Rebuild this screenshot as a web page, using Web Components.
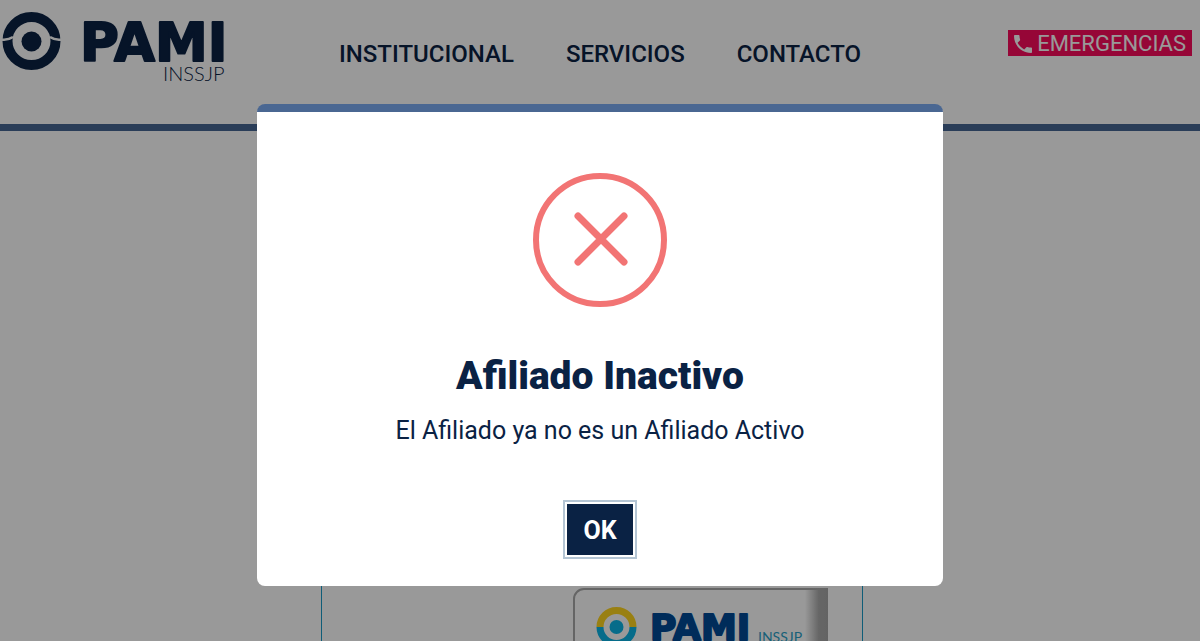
<!DOCTYPE html>
<html lang="es">
<head>
<meta charset="utf-8">
<meta name="viewport" content="width=device-width, initial-scale=1">
<title>PAMI - Afiliado</title>
<style>
    body{
        background: #fff;
        color: #0a2244;
        font-family: Roboto, "Liberation Sans", sans-serif;
        margin: 0;
        overflow: hidden;
    }
</style>
</head>
<body>
    <site-header>
        <pami-logo slot="logo"></pami-logo>
        <nav-link href="#institucional">INSTITUCIONAL</nav-link>
        <nav-link href="#servicios">SERVICIOS</nav-link>
        <nav-link href="#contacto">CONTACTO</nav-link>
        <emergency-link slot="action" href="#emergencias">EMERGENCIAS</emergency-link>
    </site-header>
    <affiliate-panel>
        <affiliate-card></affiliate-card>
    </affiliate-panel>
    <alert-modal>
        <span slot="title">Afiliado Inactivo</span>
        <span slot="text">El Afiliado ya no es un Afiliado Activo</span>
        <span slot="confirm">OK</span>
    </alert-modal>

<script>
class BaseElement extends HTMLElement
{
    constructor()
    {
        super();
        this.attachShadow({mode: "open"});
    }

    connectedCallback()
    {
        const template = document.createElement("template");
        template.innerHTML = `${this.getStyles()}${this.getTemplate()}`;
        this.shadowRoot.replaceChildren(template.content.cloneNode(true));
    }
}

class SiteHeader extends BaseElement
{
    getTemplate()
    {
        return `
            <header>
                <slot name="logo"></slot>
                <nav aria-label="Principal"><slot></slot></nav>
                <div class="action"><slot name="action"></slot></div>
            </header>
        `
    }

    getStyles()
    {
        return `
        <style>
            :host{
                display: block;
            }

            header{
                align-items: start;
                border-bottom: 7px solid #466793;
                display: grid;
                grid-template-columns: 1fr auto 1fr;
                min-height: 124px;
            }

            nav{
                display: flex;
                gap: 52px;
                padding-top: 39px;
            }

            .action{
                display: flex;
                justify-content: flex-end;
                padding: 30px 8px 0 0;
            }
        </style>
        `
    }
}
customElements.define("site-header", SiteHeader);

class NavLink extends BaseElement
{
    getTemplate()
    {
        return `<a href="${this.getAttribute("href")}"><slot></slot></a>`
    }

    getStyles()
    {
        return `
        <style>
            :host{
                display: block;
            }

            a{
                color: inherit;
                display: block;
                font-size: 24px;
                font-weight: 500;
                line-height: 30px;
                text-decoration: none;
            }
        </style>
        `
    }
}
customElements.define("nav-link", NavLink);

class EmergencyLink extends BaseElement
{
    getTemplate()
    {
        return `
            <a href="${this.getAttribute("href")}">
                <svg viewBox="3 3 18 18" aria-hidden="true">
                    <path fill="currentColor" d="M6.6 10.8c1.4 2.8 3.8 5.1 6.6 6.6l2.2-2.2c.3-.3.7-.4 1-.2 1.1.4 2.3.6 3.6.6.6 0 1 .4 1 1V20c0 .6-.4 1-1 1C10.6 21 3 13.4 3 4c0-.6.4-1 1-1h3.5c.6 0 1 .4 1 1 0 1.2.2 2.4.6 3.6.1.3 0 .7-.2 1L6.6 10.8z"/>
                </svg>
                <slot></slot>
            </a>
        `
    }

    getStyles()
    {
        return `
        <style>
            :host{
                display: block;
            }

            a{
                align-items: center;
                background: #fb0a5c;
                color: #fff;
                display: flex;
                font-size: 22px;
                gap: 5px;
                line-height: 24px;
                padding: 2px 6px 0;
                text-decoration: none;
            }

            svg{
                height: 18px;
                width: 18px;
            }
        </style>
        `
    }
}
customElements.define("emergency-link", EmergencyLink);

class PamiLogo extends BaseElement
{
    getTemplate()
    {
        return `
            <svg viewBox="0 0 232 90" role="img" aria-label="PAMI INSSJP">
                <circle cx="31.5" cy="41" r="24" fill="none" stroke="currentColor" stroke-width="10"/>
                <path d="M1 39.5 Q8 40.5 13 37 M50 37 Q55 40.5 62 39.5" fill="none" stroke="#fff" stroke-width="2.5"/>
                <circle cx="31.5" cy="41.5" r="10" fill="currentColor"/>
                <text class="name" x="80" y="61">PAMI</text>
                <text class="sub" x="163" y="81">INSSJP</text>
            </svg>
        `
    }

    getStyles()
    {
        return `
        <style>
            :host{
                display: block;
            }

            svg{
                display: block;
                height: 90px;
                width: 232px;
            }

            .name{
                fill: currentColor;
                font: 700 53px "DejaVu Sans", sans-serif;
                stroke: currentColor;
                stroke-linejoin: round;
                stroke-width: 2px;
            }

            .sub{
                fill: currentColor;
                font: 300 20px Lato, sans-serif;
            }
        </style>
        `
    }
}
customElements.define("pami-logo", PamiLogo);

class AffiliatePanel extends BaseElement
{
    getTemplate()
    {
        return `<main><slot></slot></main>`
    }

    getStyles()
    {
        return `
        <style>
            :host{
                display: block;
                padding-right: 16px;
            }

            main{
                border: solid #1a9bc9;
                border-width: 0 1px;
                box-sizing: border-box;
                display: flex;
                justify-content: flex-end;
                margin: 0 auto;
                max-width: 542px;
                padding: 457px 34px 40px;
            }
        </style>
        `
    }
}
customElements.define("affiliate-panel", AffiliatePanel);

class AffiliateCard extends BaseElement
{
    getTemplate()
    {
        return `
            <svg viewBox="0 0 255 160" role="img" aria-label="Credencial PAMI INSSJP">
                <defs>
                    <linearGradient id="edge">
                        <stop offset="0" stop-color="#aaa" stop-opacity="0"/>
                        <stop offset="0.6" stop-color="#aaa"/>
                        <stop offset="1" stop-color="#a6a6a6"/>
                    </linearGradient>
                </defs>
                <path d="M255 1 H11 A10 10 0 0 0 1 11 V160" fill="none" stroke="#a8a8a8" stroke-width="2"/>
                <rect x="232" y="0" width="23" height="160" fill="url(#edge)"/>
                <g fill="none" stroke-width="7">
                    <path d="M27 39 A16.5 16.5 0 0 1 60 39" stroke="#ffd51e"/>
                    <path d="M27 39 A16.5 16.5 0 0 0 60 39" stroke="#0ab4e6"/>
                </g>
                <circle cx="43.5" cy="39" r="7" fill="#0ab4e6"/>
                <text class="name" x="77" y="52">PAMI</text>
                <text class="sub" x="185" y="54">INSSJP</text>
            </svg>
        `
    }

    getStyles()
    {
        return `
        <style>
            :host{
                display: block;
            }

            svg{
                display: block;
                height: 160px;
                width: 255px;
            }

            .name{
                fill: #004a96;
                font: 700 36px "DejaVu Sans", sans-serif;
                stroke: #004a96;
                stroke-linejoin: round;
                stroke-width: 2px;
            }

            .sub{
                fill: #2a9fc8;
                font: 400 14px Lato, sans-serif;
            }
        </style>
        `
    }
}
customElements.define("affiliate-card", AffiliateCard);

class AlertModal extends BaseElement
{
    getTemplate()
    {
        return `
            <section role="alertdialog" aria-modal="true" aria-labelledby="title" aria-describedby="text">
                <svg viewBox="0 0 134 134" aria-hidden="true">
                    <circle cx="67" cy="67" r="64" stroke-width="6"/>
                    <path d="M45 43 L91 89 M91 43 L45 89" stroke-width="7" stroke-linecap="round"/>
                </svg>
                <h2 id="title"><slot name="title"></slot></h2>
                <p id="text"><slot name="text"></slot></p>
                <button type="button"><slot name="confirm"></slot></button>
            </section>
        `
    }

    getStyles()
    {
        return `
        <style>
            :host{
                align-items: flex-start;
                background: rgba(0, 0, 0, 0.4);
                box-sizing: border-box;
                display: flex;
                inset: 0;
                justify-content: center;
                overflow: auto;
                padding: 104px 16px 16px;
                position: fixed;
            }

            section{
                align-items: center;
                background: #fff;
                border-radius: 8px;
                border-top: 8px solid #4a6792;
                box-sizing: border-box;
                display: flex;
                flex-direction: column;
                max-width: 686px;
                padding: 61px 20px 31px;
                text-align: center;
                width: 100%;
            }

            svg{
                fill: none;
                height: 134px;
                stroke: #f27474;
                width: 134px;
            }

            h2{
                font-size: 39px;
                font-weight: 900;
                line-height: 48px;
                margin: 45px 0 0;
            }

            p{
                font-size: 25px;
                line-height: 30px;
                margin: 16px 0 0;
            }

            button{
                background: #0a2244;
                border: 0;
                box-shadow: 0 0 0 2px #fff, 0 0 0 4px #b4c5d4;
                color: #fff;
                cursor: pointer;
                font: 700 25px/30px Roboto, sans-serif;
                margin-top: 58px;
                padding: 12px 16px 9px;
            }
        </style>
        `
    }
}
customElements.define("alert-modal", AlertModal);
</script>
</body>
</html>
